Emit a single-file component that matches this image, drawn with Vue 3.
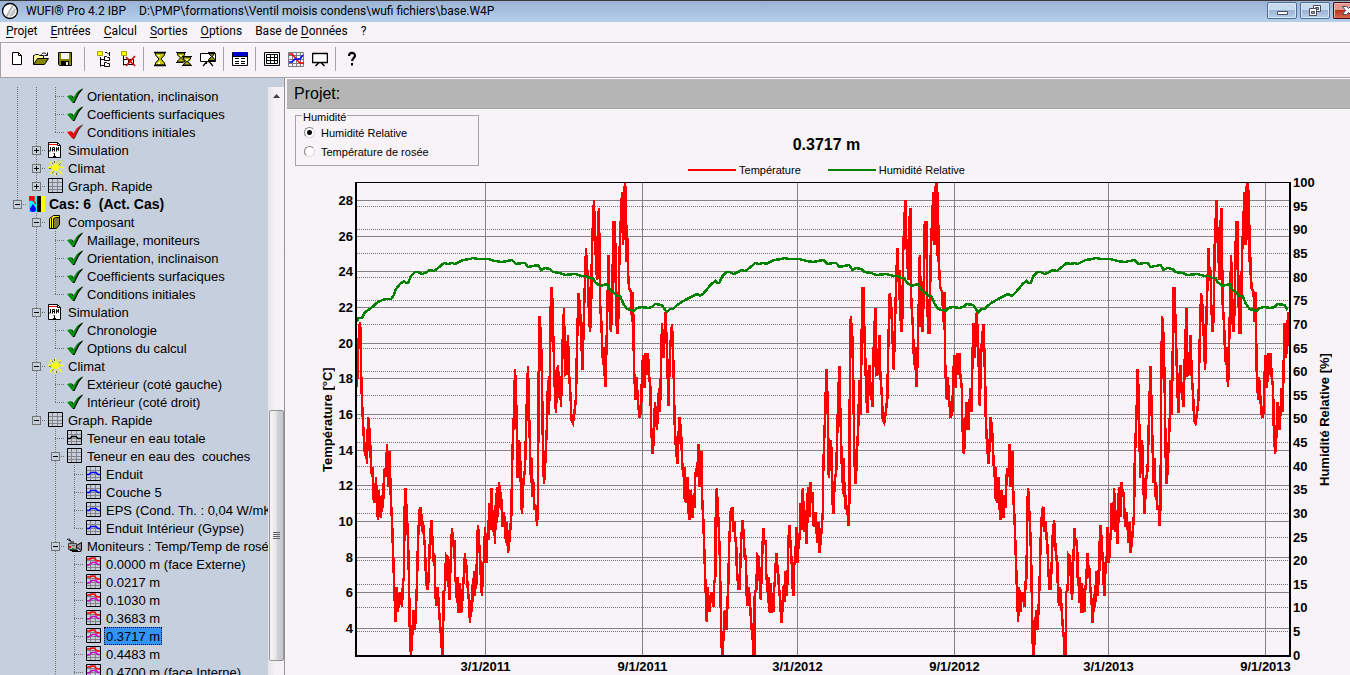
<script setup>
import { ref, computed } from 'vue'

const menus = [
  ['', 'P', 'rojet'], ['', 'E', 'ntrées'], ['', 'C', 'alcul'], ['', 'S', 'orties'],
  ['', 'O', 'ptions'], ['Base de ', 'D', 'onnées'], ['?', '', '']
]

const toolGroups = [
  [['new', 'Nouveau'], ['open', 'Ouvrir'], ['save', 'Enregistrer']],
  [['case-add', 'Nouveau cas'], ['case-del', 'Supprimer le cas']],
  [['glass', 'Calculer'], ['glasses', 'Calculer tout'], ['screen-glass', 'Calculer avec film']],
  [['window', 'Fenêtre']],
  [['table', 'Tableau'], ['graph', 'Graphique'], ['screen', 'Film']],
  [['help', 'Aide']]
]

/* Guide cells: | line, t branch, l last branch, p/P closed node, m/M open node
   (capitals end their branch). */
const tree = [
  ['||t', 'tick', 'Orientation, inclinaison'],
  ['||t', 'tick', 'Coefficients surfaciques'],
  ['||l', 'tick-red', 'Conditions initiales'],
  ['|p', 'calendar', 'Simulation'],
  ['|p', 'sun', 'Climat'],
  ['|P', 'grid', 'Graph. Rapide'],
  ['M', 'case', 'Cas: 6  (Act. Cas)'],
  [' m', 'book', 'Composant'],
  [' |t', 'tick', 'Maillage, moniteurs'],
  [' |t', 'tick', 'Orientation, inclinaison'],
  [' |t', 'tick', 'Coefficients surfaciques'],
  [' |l', 'tick', 'Conditions initiales'],
  [' m', 'calendar', 'Simulation'],
  [' |t', 'tick', 'Chronologie'],
  [' |l', 'tick', 'Options du calcul'],
  [' m', 'sun', 'Climat'],
  [' |t', 'tick', 'Extérieur (coté gauche)'],
  [' |l', 'tick', 'Intérieur (coté droit)'],
  [' M', 'grid', 'Graph. Rapide'],
  ['  t', 'curve-black', 'Teneur en eau totale'],
  ['  m', 'grid', 'Teneur en eau des  couches'],
  ['  |t', 'curve-blue', 'Enduit'],
  ['  |t', 'curve-blue', 'Couche 5'],
  ['  |t', 'curve-blue', 'EPS (Cond. Th. : 0,04 W/mK)'],
  ['  |l', 'curve-blue', 'Enduit Intérieur (Gypse)'],
  ['  m', 'camera', 'Moniteurs : Temp/Temp de rosée'],
  ['  |t', 'curves', '0.0000 m (face Externe)'],
  ['  |t', 'curves', '0.0217 m'],
  ['  |t', 'curves', '0.1030 m'],
  ['  |t', 'curves', '0.3683 m'],
  ['  |t', 'curves', '0.3717 m'],
  ['  |t', 'curves', '0.4483 m'],
  ['  |t', 'curves', '0.4700 m (face Interne)']
]
const kinds = { '|': 'line', t: 'branch', l: 'last', p: 'branch', P: 'last', m: 'branch', M: 'last', ' ': 'blank' }
const isNode = c => 'pPmM'.includes(c)
const selected = '0.3717 m'
const mode = ref('rh')

/* Chart space */
const X0 = 357, Y0 = 183, W = 932, H = 472
const YEAR = 311.3

const tempStart = '357,387 358,355 359,332 360,322 361,340 361,367 362,402 363,422 364,440 365,456 366,442 367,464'
const tempYear = `368,417 369,424 370,438 371,464 372,477 373,467 373,498 375,503 376,477 377,508 378,520 379,490
380,512 381,518 382,495 383,508 384,475 385,468 386,477 387,444 388,487 389,452 390,452 390,470 391,502 392,520 393,550
394,580 395.5,622 396.5,587 398,612 399,597 400,592 402,607 403,582 404,577 404.5,512 405.5,488 406.5,508 407.5,528
408.5,556 409.5,610 410,642 411,655 412,640 413.5,610 415,630 416,608 417,583 418,540 419.5,510 421,507 422,532
423,521 424,538 425,547 425.5,567 427,589 428,589 429,567 430,537 431.5,520 432.5,540 433.5,557 434.5,555 435.5,597
436.5,606 437.5,587 438.5,600 439.5,617 440.5,630 441.5,640 442,655 443,655 443.5,592 445,590 446,555 447.5,557
448,573 449.5,600 450.5,565 452,528 453,543 454.5,540 455,577 456,583 457,603 457.5,577 458.5,613 459.5,583 460.5,613
461,593 462,612 462.5,592 463.5,582 465,553 466,573 466.5,565 467.5,585 469,602 470,623 471,600 471.5,612 472.5,585
473,602 474,571 475,596 476,570 476.5,585 477,544 478,525 479,541 480.5,565 481,583 482,596 483,563 484,562 485,527
486.5,563 487.5,533 488.5,540 489,503 490.5,530 491.5,488 493,532 494,510 495,544 496,493 496.5,523 497,487 498,517
499,482 500,493 501,493 502.5,527 504,512 505,527 506,543 507,522 508,553 509.5,540 510.5,527 511.5,512 512,468
513,437 514,412 515,369 516,392 517,440 517.5,478 519,440 520,447 520.5,473 521.5,506 522,514 523.5,480 525,470
526.5,412 528,366 529,410 530,447 531,483 532,458 532.5,497 533.5,482 534.5,510 536,505 537,526 538,503 538.5,392
539.5,316 541,337 542,382 543,452 544,484 545,470 546,445 547,425 548,380 549,415 550,363 551,288 552,288 553,328
554,360 555,395 556,413 557,375 558,365 559,392 560,400 560.5,382 561,407 562.5,345 564,308 565,375 566.5,374
568,335 569,373 570.5,395 571.5,420 573,423 574.5,412 576,398 577,345 578.5,293 580,307 581.5,345 582.5,370 584,312
586,248 587,277 588,270 588.5,302 590,332 591,318 592,248 593,222 594,200 595,240 597,280 598,222 599,208 600,302
601.5,325 602.5,355 603.5,365 604,347 604.5,372 605.5,387 607,325 608.5,255 610,322 611,332 612,308 613.5,222
615,222 616,302 617,333 618,333 619.5,253 620.5,227 622,192 623,245 624,186 624,240 625,183 626,193 626.5,262
627,225 628,272 629,288 631,292 632,322 633,292 633.5,333 634,368 635.5,400 636.5,377 638,402 639.5,418 641,412
642,375 643,355 644.5,388 645.5,353 646.5,375 648,353 649,375 650.5,388 651,422 652.5,454 653.5,443 655,402
656,418 657,430 659,388 660,412 662,323 663.5,358 665.5,312 667,350 668.5,406 670,350 672,324 673,350 674,387
674.5,420 676,450 677.5,464`
const rhStart = '357,322 358,318 362,318 365,312 370,309 378,302 385,299 391,299 394,295'
const rhYear = `396,289 400,284 404,281 406,283 408,283 411,276 415,272 418,272 422,274 425,273 430,270
434,271 438,268 444,263 448,264 452,263 455,264 463,260 470,259 473,258 478,259 480,259 488,259 495,261 502,262
507,261 512,260 516,264 522,263 525,263 528,267 533,266 538,265 541,270 545,268 550,269 553,272 560,273 565,275
575,274 582,276 586,276 590,278 593,278 595,282 600,286 607,284 610,290 613,292 617,296 620,296 623,303 627,309
631,310 634,311 637,308 642,307 648,308 652,307 655,304 662,305 665,310 667,312 670,309 673,309 676,306 680,303
687,299 697,294 700,296 703,294`

const parse = s => s.trim().split(/\s+/).map(p => p.split(',').map(Number))
function series(start, year) {
  const pts = parse(start)
  const base = parse(year)
  for (let k = 0; k < 3; k++) {
    for (const [x, y] of base) {
      const px = x + k * YEAR
      if (px <= X0 + W) pts.push([px, y])
    }
  }
  return pts.map(p => p.join(',')).join(' ')
}
const tempLine = computed(() => series(tempStart, tempYear) + ' 1289,346')
const rhLine = computed(() => series(rhStart, rhYear))

const temps = Array.from({ length: 13 }, (_, i) => {
  const v = 28 - 2 * i
  return { v, y: Math.floor(200.4 + i * 35.66) + 0.5 }
})
const hums = Array.from({ length: 21 }, (_, i) => {
  const v = 100 - 5 * i
  return { v, y: Math.floor(182.6 + i * 23.63) + 0.5 }
})
const dates = [
  { t: '3/1/2011', x: 485.5 }, { t: '9/1/2011', x: 642.5 }, { t: '3/1/2012', x: 797.5 },
  { t: '9/1/2012', x: 954.5 }, { t: '3/1/2013', x: 1108.5 }, { t: '9/1/2013', x: 1265.5 }
]
const top = y => ({ top: ((y - Y0) / H) * 100 + '%' })
const left = x => ({ left: ((x - X0) / W) * 100 + '%' })
</script>

<template>
  <div class="app">
    <svg class="defs" aria-hidden="true">
      <symbol id="i-new" viewBox="0 0 16 16"><path d="M3.500 1.500h6l3 3v9h-9z" fill="#fff" stroke="#000" /><path d="M9.500 1.500v3h3" fill="none" stroke="#000" /></symbol>
      <symbol id="i-open" viewBox="0 0 16 16"><path d="M.5 13.500v-9h1l1-1h3l1 1h4v3" fill="#ffff9c" stroke="#000" /><path d="M.5 13.500l4-6h11l-4 6z" fill="#848400" stroke="#000" /><path d="M8.500 3.500c1-2 4-2 5 0M14.500 1.500v3h-3" fill="none" stroke="#000" /></symbol>
      <symbol id="i-save" viewBox="0 0 16 16"><path d="M1.500 1.500h13v13h-12l-1-1z" fill="#848400" stroke="#000" /><path d="M4 2h8v6H4z" fill="#f7f3f7" /><path d="M4 10h8v5H4z" fill="#000" /><path d="M9 11h2v3H9z" fill="#f7f3f7" /></symbol>
      <symbol id="i-case-add" viewBox="0 0 16 16"><path d="M4.500 6v9.500M4.500 8.500h4M4.500 14.500h4M9 1.500h2l2 2M13.500 1v4" fill="none" stroke="#000" /><path d="M1.500 .5h5v4h-5z" fill="#ff0" stroke="#a5a500" /><path d="M8.500 5.500h2l1 1h2v3h-5zM8.500 11.500h2l1 1h2v3h-5z" fill="#fff" stroke="#000" /></symbol>
      <symbol id="i-case-del" viewBox="0 0 16 16"><path d="M3.500 5v9.500M3.500 8.500h4M3.500 13.500h4" fill="none" stroke="#000" /><path d="M1.500 .5h5v4h-5z" fill="#ff0" stroke="#a5a500" /><path d="M8.500 8.500h5v5h-5z" fill="#fff" stroke="#000" /><path d="M6 6l9 9M15 5L6 15" stroke="#e00000" stroke-width="1.600" /></symbol>
      <symbol id="i-glass" viewBox="0 0 16 16"><path d="M3.500 2v2l3.500 4-3.500 4v2h9v-2L9 8l3.500-4V2z" fill="#c6c600" stroke="#000" /><path d="M5 4h3L7 6zM5 13l3-3v3z" fill="#fff" /><path d="M2 1.500h12M2 14.500h12" stroke="#000" stroke-width="1.300" /></symbol>
      <symbol id="i-glasses" viewBox="0 0 16 16"><path d="M1.500 2v2l3 3-3 3v1h7v-1l-3-3 3-3V2zM7.500 6v2l3 3-3 2v1h7v-1l-3-2 3-3V6z" fill="#b5b500" stroke="#000" /><path d="M3 4h3L5 6zM9 8h3l-1 2z" fill="#fff" /><path d="M0 1.500h10M0 11.500h7M6 5.500h10M6 14.500h10" stroke="#000" /></symbol>
      <symbol id="i-screen" viewBox="0 0 16 16"><path d="M.5 2.500h15v9H.5z" fill="#fff" stroke="#000" stroke-width="1.500" /><path d="M7 11.500L3.500 15M9 11.500l3.500 3.500" stroke="#000" stroke-width="1.500" /></symbol>
      <symbol id="i-screen-glass" viewBox="0 0 16 16"><path d="M.5 2.500h15v8H.5z" fill="#fff" stroke="#000" /><path d="M7 10.500L3 15M9 10.500l4 4.500M6.500 10v3" stroke="#000" stroke-width="1.200" /><path d="M8.500 2.500l3 3-3 3v1h6v-1l-2-3 2-3z" fill="#848400" stroke="#000" /><path d="M8 1.500h7M8 9.500h7" stroke="#000" /></symbol>
      <symbol id="i-window" viewBox="0 0 16 16"><path d="M.5 1.500h15v13H.5z" fill="#fff" stroke="#000" /><path d="M1 1h14v4H1z" fill="#00c" /><path d="M1 5.500h14M3 7.500h4M9 7.500h4M3 10.500h4M9 10.500h4M3 12.500h4M9 12.500h4" stroke="#000" /></symbol>
      <symbol id="i-table" viewBox="0 0 16 16"><path d="M.5 1.500h15v13H.5z" fill="#fff" stroke="#000" /><path d="M2.500 3.500h11v9h-11zM2.500 6.500h11M2.500 9.500h11M6.500 3.500v9M10.500 3.500v9" fill="#fff" stroke="#000" /></symbol>
      <symbol id="i-graph" viewBox="0 0 16 16"><path d="M.5 1.500h15v14H.5zM4.500 1v14M8.500 1v14M12.500 1v14M0 4.500h16M0 8.500h16M0 12.500h16" fill="none" stroke="#7b7b7b" /><path d="M1 3l3 0 5 6 3 3h4" fill="none" stroke="#f00" stroke-width="1.500" /><path d="M1 11h3l3-3h5l3-4" fill="none" stroke="#00f" stroke-width="1.500" /></symbol>
      <symbol id="i-help" viewBox="0 0 16 16"><path d="M5 5c0-4 6-4 6-.5C11 7 8.500 7 8 10" fill="none" stroke="#000" stroke-width="2.200" /><path d="M7 12h2v2.500H7z" /></symbol>

      <symbol id="i-tick" viewBox="0 0 16 16"><path d="M1 9l4-1.500 2 2.500 4-6 4.500-3.500L16 1l-4 5-4.500 9H6z" fill="#000" /><path d="M0 8l4-1 2 3 4-6 4.500-3.500L11 5 7 14H5z" fill="#00920a" /></symbol>
      <symbol id="i-tick-red" viewBox="0 0 16 16"><path d="M1 9l4-1.500 2 2.500 4-6 4.500-3.500L16 1l-4 5-4.500 9H6z" fill="#424242" /><path d="M0 8l4-1 2 3 4-6 4.500-3.500L11 5 7 14H5z" fill="#f00" /></symbol>
      <symbol id="i-calendar" viewBox="0 0 16 16"><path d="M.5 .5h9l3 3v12H.5z" fill="#fff" stroke="#000" /><path d="M9.500 .5v3h3" fill="none" stroke="#000" /><path d="M1 2.500h8" stroke="#f00" /><path d="M2.500 5v4H1M4.500 9.500V5.500h2v4M4.500 7.500h2M8.500 9.500v-4l2 3v-3.500M5.500 11.500h1v3M5 14.500h3" fill="none" stroke="#000" /></symbol>
      <symbol id="i-sun" viewBox="0 0 16 16"><path d="M7.500 0v4M7.500 12v4M0 7.500h3M12 7.500h4M2 2l2.500 2.500M11 11l3 3M13 2l-2.500 2.500M5 11l-3 3" stroke="#ff0" stroke-width="1.500" /><path d="M6.500 1v2M4 3l1.500 1.500M12.500 3.500L11 5M1 8.500h2M4 13l1.500-1.500M8.500 13v2" stroke="#6b6b21" /><circle cx="7.500" cy="7.500" r="3.500" fill="#ff0" /></symbol>
      <symbol id="i-grid" viewBox="0 0 16 16"><path d="M4.500 1v13M9.500 1v13M1 4.500h13M1 8.500h13M1 11.500h13" stroke="#848284" /><path d="M.5 .5h14v14H.5z" fill="none" stroke="#000" /></symbol>
      <symbol id="i-curve-black" viewBox="0 0 16 16"><use href="#i-grid" /><path d="M1 8.500h2l2-2h4l2 2h3" fill="none" stroke="#000" stroke-width="1.300" /></symbol>
      <symbol id="i-curve-blue" viewBox="0 0 16 16"><use href="#i-grid" /><path d="M1 8.500h2l2-2h5l2 2h2" fill="none" stroke="#00f" stroke-width="1.400" /></symbol>
      <symbol id="i-curves" viewBox="0 0 16 16"><use href="#i-grid" /><path d="M1 3h3l2-1h2l3 3h3" fill="none" stroke="#f00" stroke-width="1.600" /><path d="M1 9h2l3-2.500h4l2 2h2" fill="none" stroke="#c600c6" stroke-width="1.400" /></symbol>
      <symbol id="i-case" viewBox="0 0 16 16"><path d="M0 0h8v16H0z" fill="#0ff" /><path d="M8 0h4v16H8z" fill="#000" /><path d="M12 0h4v16h-4z" fill="#ff0" /><path d="M0 0h5v4H0zM2 2l5 6" fill="#f00" stroke="#f00" stroke-width="1.300" /><path d="M4 8c1 2 3 3 3 5a3 3 0 0 1-6 0c0-2 2-3 3-5z" fill="#00f" /></symbol>
      <symbol id="i-book" viewBox="0 0 16 16"><path d="M1.500 4.500l4-3h6v9l-4 4h-6z" fill="#ff0" stroke="#000" /><path d="M5.500 4.500l2-1h4v7l-3 4h-3z" fill="#7b7b42" stroke="#000" /><path d="M3.500 4v10" stroke="#000" /></symbol>
      <symbol id="i-camera" viewBox="0 0 16 16"><path d="M0 1l3 2M2 .5l2 3M3 4h4" stroke="#000" /><path d="M1.500 5.500h8v6h-8z" fill="#adaaad" stroke="#424142" /><path d="M9.500 7.500l5-3v8l-5-3z" fill="#948e94" stroke="#000" /><path d="M5 7.500h3" stroke="#636163" /><path d="M2 8h2v2H2z" fill="#f00" /><path d="M5 10h2v1H5z" fill="#0a0" /><path d="M3 12.500h8M5 13.500h9" stroke="#000" /></symbol>
    </svg>

    <header class="titlebar">
      <svg class="logo" viewBox="0 0 18 18" aria-hidden="true"><circle cx="9" cy="9" r="7.500" fill="#fff" stroke="#000" stroke-width="1.300" /><path d="M12 3.500L5.500 14.500" stroke="#b5b5b5" stroke-width="2" /><path d="M13.500 5a6 6 0 0 1-6 9.500z" fill="#c6c6c6" /></svg>
      <span class="name">WUFI® Pro 4.2 IBP</span>
      <span class="path">D:\PMP\formations\Ventil moisis condens\wufi fichiers\base.W4P</span>
      <div class="winbtns">
        <button class="winbtn" aria-label="Réduire"><svg width="28" height="14"><path d="M9.500 8.500h10v3h-10z" fill="#fff" stroke="#4a4a5a" /></svg></button>
        <button class="winbtn" aria-label="Restaurer"><svg width="28" height="14"><path d="M12.500 2.500h7v6h-7z" fill="#fff" stroke="#4a4a5a" /><path d="M14.500 4.500h3v2h-3z" fill="#9cb5d6" stroke="#4a4a5a" /><path d="M8.500 5.500h7v7h-7z" fill="#fff" stroke="#4a4a5a" /><path d="M10.500 8.500h3v2h-3z" fill="#9cb5d6" stroke="#4a4a5a" /></svg></button>
        <button class="winbtn close" aria-label="Fermer"><svg width="28" height="14"><path d="M8.500 3.500h4l2 2 2-2h4l-4 4 4 4h-4l-2-2-2 2h-4l3-4z" fill="#fff" stroke="#4a4a5a" /></svg></button>
      </div>
    </header>

    <nav class="menubar">
      <button v-for="(m, i) in menus" :key="i">{{ m[0] }}<u>{{ m[1] }}</u>{{ m[2] }}</button>
    </nav>

    <div class="toolbar" role="toolbar">
      <div v-for="(g, i) in toolGroups" :key="i" class="group" :class="{ wide: i === 0 }">
        <button v-for="t in g" :key="t[0]" :aria-label="t[1]"><svg width="16" height="16"><use :href="'#i-' + t[0]" /></svg></button>
      </div>
    </div>

    <div class="body">
      <aside class="side">
        <ul class="tree">
          <li v-for="(r, i) in tree" :key="i">
            <span v-for="(c, j) in r[0].split('')" :key="j" class="cell" :class="kinds[c]">
              <button v-if="isNode(c)" class="box" :class="{ plus: c === 'p' || c === 'P' }" :aria-label="r[2]"></button>
            </span>
            <svg class="icon" width="16" height="16"><use :href="'#i-' + r[1]" /></svg>
            <span class="label" :class="{ bold: r[1] === 'case', sel: r[2] === selected }">{{ r[2] }}</span>
          </li>
        </ul>
        <div class="scroll">
          <svg class="up" width="7" height="4"><path d="M0 4L3.500 0 7 4z" fill="#424242" /></svg>
          <div class="before"></div>
          <div class="thumb"><i></i><i></i><i></i><i></i></div>
          <div class="after"></div>
        </div>
      </aside>

      <main class="main">
        <h1 class="project">Projet:</h1>
        <div class="head">
          <fieldset>
            <legend>Humidité</legend>
            <label><input v-model="mode" type="radio" name="hum" value="rh">Humidité Relative</label>
            <label><input v-model="mode" type="radio" name="hum" value="dew">Température de rosée</label>
          </fieldset>
          <div class="caption">
            <h2>0.3717 m</h2>
            <div class="legend">
              <span class="key red">Température</span>
              <span class="key green">Humidité Relative</span>
            </div>
          </div>
        </div>
        <div class="chart">
          <div class="axis-title">Température [°C]</div>
          <div class="ticks l"><span v-for="t in temps" :key="t.v" :style="top(t.y)">{{ t.v }}</span></div>
          <svg class="plot" viewBox="357 183 932 472" preserveAspectRatio="none">
            <g class="solid">
              <line v-for="t in temps" :key="t.v" x1="357" x2="1289" :y1="t.y" :y2="t.y" />
              <line v-for="d in dates" :key="d.t" :x1="d.x" :x2="d.x" y1="183" y2="655" />
            </g>
            <g class="dots">
              <line v-for="h in hums.slice(1, 20)" :key="h.v" x1="357" x2="1289" :y1="h.y" :y2="h.y" />
            </g>
            <polyline class="temp" :points="tempLine" />
            <polyline class="rh" :points="rhLine" />
          </svg>
          <div class="ticks r"><span v-for="h in hums" :key="h.v" :style="top(h.y)">{{ h.v }}</span></div>
          <div class="axis-title">Humidité Relative [%]</div>
          <div class="dates"><span v-for="d in dates" :key="d.t" :style="left(d.x)">{{ d.t }}</span></div>
        </div>
      </main>
    </div>
  </div>
</template>

<style>
body { background: #f7f3f7; overflow: hidden; }
</style>

<style scoped>
* { box-sizing: border-box; }
.app { height: 100vh; display: flex; flex-direction: column; overflow: hidden; background: #f7f3f7; color: #000; font: 13px "Liberation Sans", Arial, sans-serif; }
.defs { position: absolute; width: 0; height: 0; }
button { border: 0; padding: 0; margin: 0; background: none; font: inherit; color: inherit; }

.titlebar { flex: none; height: 22px; border-top: 1px solid #393939; display: flex; align-items: center; padding: 0 0 2px 1px; background: linear-gradient(#9cb3d3, #b5cfeb); font: 12px Roboto, sans-serif; white-space: nowrap; }
.logo { width: 18px; height: 18px; margin-right: 7px; }
.path { margin-left: 13px; }
.winbtns { margin-left: auto; align-self: flex-start; display: flex; gap: 3px; padding-top: 1px; }
.winbtn { width: 30px; height: 17px; border: 1px solid #526b94; border-radius: 2px; box-shadow: inset 0 0 0 1px #d6e7f7; background: linear-gradient(#c6daef 45%, #9cb5d6 50%, #b5cfe7); overflow: hidden; display: flex; }
.winbtn svg { flex: none; }
.close { width: 17px; border-color: #4a0818; border-right: 0; border-radius: 2px 0 0 2px; box-shadow: inset 1px 1px 0 #f0b5ad; background: linear-gradient(#e0968c 45%, #bd3118 50%, #d66b52); }

.menubar { flex: none; height: 20px; display: flex; gap: 13px; padding: 0 6px 2px; align-items: center; font: 12px Roboto, sans-serif; }
.menubar u { text-underline-offset: 2px; }

.toolbar { flex: none; height: 36px; display: flex; align-items: center; padding: 0 0 2px 4px; border: 1px solid #a5a2a5; border-right: 0; box-shadow: inset 0 1px #fff, 0 1px #fff; }
.group { display: flex; align-items: center; }
.group button { width: 24px; height: 24px; display: grid; place-items: center; }
.group:not(:last-child)::after { content: ""; width: 1px; height: 24px; margin: 0 4px 0 3px; background: #a5a2a5; }
.group.wide::after { margin: 0 7px; }

.body { flex: 1; min-height: 0; display: flex; }
.side { flex: none; width: 285px; display: flex; padding-top: 9px; background: #c6cfde; border-right: 1px solid #949294; }
.tree { flex: 1; min-width: 0; margin: 0; padding: 0; list-style: none; overflow: hidden; }
.tree li { height: 18px; padding-left: 8px; display: flex; align-items: center; white-space: pre; }
.cell { flex: none; width: 19px; height: 18px; padding: 5px; background-repeat: no-repeat; }
.line { background-image: repeating-linear-gradient(#737573 0 1px, transparent 1px 2px); background-size: 1px 100%; background-position: 9px 0; }
.branch, .last { background-image: repeating-linear-gradient(#737573 0 1px, transparent 1px 2px), repeating-linear-gradient(90deg, #737573 0 1px, transparent 1px 2px); background-position: 9px 0, 9px 9px; background-size: 1px 100%, 10px 1px; background-repeat: no-repeat; }
.last { background-size: 1px 10px, 10px 1px; }
.box { display: block; width: 9px; height: 9px; border: 1px solid #737573; background: linear-gradient(#000, #000) center / 5px 1px no-repeat #c6cfde; }
.plus { background: linear-gradient(#000, #000) center / 5px 1px no-repeat, linear-gradient(#000, #000) center / 1px 5px no-repeat #c6cfde; }
.icon { flex: none; margin: 0 2px; }
.label { height: 18px; line-height: 17px; padding: 1px 2px 0; }
.bold { font-weight: bold; font-size: 14px; }
.sel { background: #3194ff; outline: 1px dotted #000; outline-offset: -1px; }
.scroll { flex: none; width: 16px; background: linear-gradient(90deg, #e7e3e7, #f3f1f3 40%, #f7f3f7); padding-top: 7px; display: flex; flex-direction: column; align-items: center; }
.up { flex: none; }
.before { flex: 313; }
.thumb { flex: 250; width: 15px; border: 1px solid #949294; border-radius: 2px; background: linear-gradient(90deg, #f7f7f7, #e7e7e7 45%, #cecfd6 60%, #c6c7ce); display: flex; flex-direction: column; align-items: center; justify-content: center; gap: 1px; }
.thumb i { width: 7px; height: 1px; background: #636163; }
.after { flex: 14; }

.main { flex: 1; min-width: 0; margin-left: 2px; display: flex; flex-direction: column; }
.project { flex: none; margin: 1px 0 0; height: 30px; line-height: 30px; padding-left: 7px; font-size: 16px; font-weight: normal; background: #b5b5b5; border-bottom: 1px solid #a5a2a5; box-shadow: 0 1px #fff; }
.head { flex: none; height: 73px; display: grid; }
.head > * { grid-area: 1 / 1; }
fieldset { margin: 2px 0 0 8px; width: 184px; height: 55px; padding: 4px 8px 0; border: 1px solid #a5a2a5; font-size: 11px; align-self: start; }
legend { padding: 0 1px; margin-left: -2px; height: 8px; line-height: 12px; }
fieldset label { display: flex; align-items: center; height: 19px; }
fieldset input { appearance: none; width: 11px; height: 11px; margin: 0 6px 0 0; border-radius: 50%; border: 1px solid; border-color: #848284 #dedbde #dedbde #848284; background: #fff; }
fieldset input:checked { background: radial-gradient(circle, #000 2px, #fff 3px); }
.caption { justify-self: center; align-self: end; padding-left: 16px; text-align: center; }
h2 { margin: 0 0 10px; font-size: 16px; line-height: 18px; }
.legend { display: flex; gap: 27px; font-size: 11px; line-height: 12px; margin-bottom: 6px; }
.key { display: flex; align-items: center; gap: 3px; }
.key::before { content: ""; width: 48px; height: 2px; background: #f00; }
.green::before { background: #008200; }

.chart { flex: 1; min-height: 0; display: grid; grid-template: minmax(0, 1fr) 18px / 17px 18px minmax(0, 1fr) 26px 17px; padding: 0 16px 0 33px; font-weight: bold; }
.axis-title { writing-mode: vertical-rl; transform: rotate(180deg); text-align: center; line-height: 16px; white-space: nowrap; }
.plot { width: 100%; height: 100%; display: block; border: solid #000; border-width: 1px 2px 2px; shape-rendering: crispEdges; }
.plot line, .plot polyline { fill: none; vector-effect: non-scaling-stroke; }
.solid { stroke: #848284; }
.dots { stroke: #737173; stroke-dasharray: 1 1; }
.plot .temp { stroke: #f00; stroke-width: 2.5; }
.plot .rh { stroke: #008200; stroke-width: 2.5; }
.ticks { position: relative; margin: 1px 0 2px; }
.ticks span { position: absolute; line-height: 14px; margin-top: -7px; }
.l span { right: 2px; }
.r span { left: 2px; }
.dates { grid-column: 3; position: relative; margin: 0 2px; }
.dates span { position: absolute; top: 3px; line-height: 14px; transform: translateX(-50%); }
</style>
